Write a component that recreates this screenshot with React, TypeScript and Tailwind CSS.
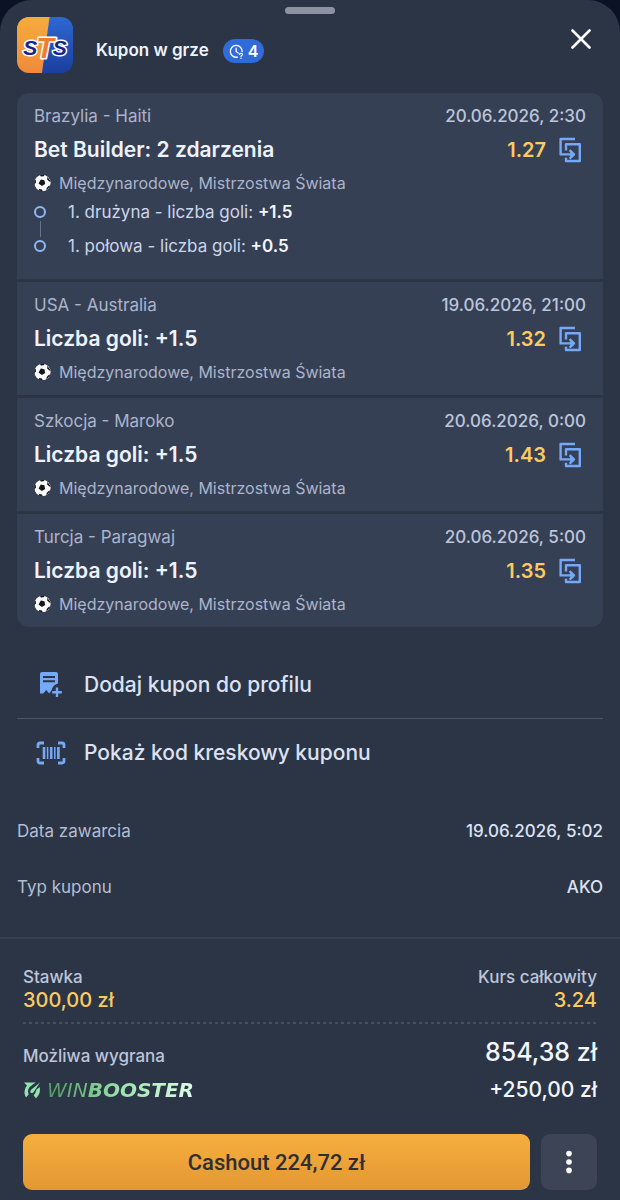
import type { ReactNode } from "react";

type Leg = {
  match: string;
  date: string;
  pick: string;
  odds: string;
  parts?: { label: string; value: string }[];
};

const legs: Leg[] = [
  {
    match: "Brazylia - Haiti",
    date: "20.06.2026, 2:30",
    pick: "Bet Builder: 2 zdarzenia",
    odds: "1.27",
    parts: [
      { label: "1. drużyna - liczba goli:", value: "+1.5" },
      { label: "1. połowa - liczba goli:", value: "+0.5" },
    ],
  },
  { match: "USA - Australia", date: "19.06.2026, 21:00", pick: "Liczba goli: +1.5", odds: "1.32" },
  { match: "Szkocja - Maroko", date: "20.06.2026, 0:00", pick: "Liczba goli: +1.5", odds: "1.43" },
  { match: "Turcja - Paragwaj", date: "20.06.2026, 5:00", pick: "Liczba goli: +1.5", odds: "1.35" },
];

function Logo() {
  return (
    <svg viewBox="0 0 56 56" className="h-14 w-14 shrink-0">
      <defs>
        <linearGradient id="logoOrange" x1="0" y1="0" x2="0" y2="1">
          <stop offset="0" stopColor="#f5ac3c" />
          <stop offset="1" stopColor="#f08a3a" />
        </linearGradient>
        <linearGradient id="logoBlue" x1="0" y1="0" x2="0" y2="1">
          <stop offset="0" stopColor="#2e68d2" />
          <stop offset="1" stopColor="#1a3f9f" />
        </linearGradient>
        <clipPath id="logoClip">
          <rect width="56" height="56" rx="12" />
        </clipPath>
      </defs>
      <g clipPath="url(#logoClip)">
        <rect width="56" height="56" fill="url(#logoBlue)" />
        <path d="M0 0H32.5L25 56H0Z" fill="url(#logoOrange)" />
      </g>
      <text
        x="28"
        y="38"
        textAnchor="middle"
        fontFamily="'Liberation Sans', sans-serif"
        fontWeight="700"
        fontStyle="italic"
        fontSize="21"
        fill="#14248a"
        stroke="#fff"
        strokeWidth="3"
        strokeLinejoin="round"
        paintOrder="stroke"
      >
        <tspan>S</tspan><tspan fontSize="29" dx="-1" dy="3" fill="#ee7f2e">T</tspan><tspan dx="-1" dy="-3">S</tspan>
      </text>
    </svg>
  );
}

function PendingIcon() {
  return (
    <svg viewBox="0 0 16 16" className="h-[15px] w-[15px]" fill="none" stroke="#fff" strokeWidth="1.4" strokeLinecap="round">
      <path d="M14 8.2A6.3 6.3 0 1 0 9 14" />
      <path d="M7.6 4.3V8l2.2 1.6" />
      <path d="M11.3 11.2c0-1.9 3-1.8 3 0 0 1.1-1.5 1.1-1.5 2.2" strokeWidth="1.2" />
      <path d="M12.8 15.2v.1" />
    </svg>
  );
}

function CopyBetIcon() {
  return (
    <svg viewBox="0 0 24 26" className="h-[26px] w-6" fill="none" stroke="#75a9f8" strokeWidth="2.4" strokeLinejoin="round">
      <path d="M17 2H2.6V17.4H14" />
      <path d="M8 13.4V7.2H21.8V24H8V20.8" />
      <path d="M11.6 13.2L16 17.4L11.6 21.6" />
      <path d="M12.4 14.4L16 17.4L12.4 20.4Z" fill="#75a9f8" stroke="none" />
    </svg>
  );
}

function BallIcon() {
  return (
    <svg viewBox="0 0 18 18" className="h-[18px] w-[17px] shrink-0">
      <defs>
        <clipPath id="ballClip">
          <circle cx="9" cy="9" r="8.8" />
        </clipPath>
      </defs>
      <g clipPath="url(#ballClip)">
        <circle cx="9" cy="9" r="8.8" fill="#fafafa" />
        <g fill="#15171c">
          <path d="M7.2 5.4L11 6.2L11.8 10L8.4 12.2L4.8 9.4Z" />
          <path d="M6 0L11.6 0L10.2 1.8L7.2 2Z" />
          <path d="M14 2.5L18 7.5L16 7.4L14 5Z" />
          <path d="M18 11.5L13.2 17L13.4 14.4L15.4 12.2Z" />
          <path d="M4 18L9.4 18L8.4 16L5.6 15.4Z" />
          <path d="M0 5.6L1.8 5.6L2 8.6L0 11Z" />
        </g>
      </g>
    </svg>
  );
}

function AddCouponIcon() {
  return (
    <svg viewBox="0 0 24 28" className="h-7 w-6">
      <path
        fillRule="evenodd"
        fill="#75a9f8"
        d="M3 1H17Q19 1 19 3V12.4Q13.5 14.2 12.6 19.2L10.2 22.4L7.2 19L4.2 22.6L1 22.6V3Q1 1 3 1ZM4 5V7H16V5ZM4 9.2V11.2H16V9.2Z"
      />
      <path d="M18 16.4V26M13.2 21.2H22.8" stroke="#75a9f8" strokeWidth="2.4" />
    </svg>
  );
}

function BarcodeIcon() {
  return (
    <svg viewBox="0 0 30 24" className="h-6 w-[30px]" fill="none" stroke="#75a9f8">
      <path
        strokeWidth="2.8"
        d="M2 7V4Q2 2 4 2H8M22 2H26Q28 2 28 4V7M28 17V20Q28 22 26 22H22M8 22H4Q2 22 2 20V17"
      />
      <path strokeWidth="2.6" d="M8 6V18M22.4 6V18M15.2 6V18" />
      <path strokeWidth="1.5" d="M11.6 6V18M18.8 6V18" />
    </svg>
  );
}

function BoosterIcon() {
  return (
    <svg viewBox="0 0 18 18" className="h-[18px] w-[18px]" fill="#8fe3ac">
      <path d="M1 1.6L13 1.4Q9.8 3 8.6 4.6Q5.4 6.4 5 10.2L5.6 13.6L3 16.6Q.2 11.6 2.6 6.4L4 4.6Z" />
      <path d="M17 1.4L10.6 11.2Q8.4 13 7.4 11.2Q7 9.6 8.4 8.6Z" />
      <path d="M16.6 6Q18.2 12.6 12.8 17.2L10.6 14.2Q12.8 12.2 13.4 8.8Z" />
    </svg>
  );
}

function LegCard({ leg }: { leg: Leg }) {
  return (
    <li className="bg-[#364055] px-[17px] pt-[11px] pb-[13px]">
      <div className="flex justify-between text-[17px] leading-6">
        <span className="text-[#abb4ca]">{leg.match}</span>
        <span className="font-medium text-[#bcc5db]">{leg.date}</span>
      </div>
      <div className="mt-2 flex items-center justify-between leading-7 font-semibold">
        <span className="text-[21px] text-[#eef2fc]">{leg.pick}</span>
        <span className="flex items-center gap-3 pr-1 text-xl leading-7 text-[#fbcb62]">
          {leg.odds}
          <button type="button" aria-label="Kopiuj zakład" className="cursor-pointer">
            <CopyBetIcon />
          </button>
        </span>
      </div>
      <div className="mt-[9px] flex items-center gap-2 text-base leading-5 text-[#abb4ca]">
        <BallIcon />
        Międzynarodowe, Mistrzostwa Świata
      </div>
      {leg.parts && (
        <ul className="mt-2 mb-[9px] flex flex-col gap-3">
          {leg.parts.map((part, i) => (
            <li key={part.label} className="relative flex items-center text-[17px] leading-[22px] text-[#ccd5ea]">
              <span className="mr-[22px] h-3 w-3 rounded-full border-2 border-[#8fb8f4]" />
              {i > 0 && <span className="absolute -top-3.5 left-1.5 h-4 w-px bg-[#68728a]" />}
              <span>
                {part.label} <b className="font-semibold text-[#f3f6fe]">{part.value}</b>
              </span>
            </li>
          ))}
        </ul>
      )}
    </li>
  );
}

function Action({ icon, children }: { icon: ReactNode; children: ReactNode }) {
  return (
    <button
      type="button"
      className="flex h-[68px] w-full cursor-pointer items-center text-left text-[21px] font-medium text-[#dbe2f3]"
    >
      <span className="flex w-[67px] justify-center">{icon}</span>
      {children}
    </button>
  );
}

export default function App() {
  return (
    <div className="min-h-screen bg-[#0b1226] font-['Inter',sans-serif]">
      <main className="flex min-h-screen flex-col rounded-t-[32px] bg-[#2c3546]">
        <div className="mx-auto mt-[7px] h-[7px] w-[50px] rounded-full bg-[#8e93a2]" />
        {/* header */}
        <header className="mt-[3px] flex items-center px-[17px]">
          <Logo />
          <h1 className="mt-3 ml-[23px] text-[17px] font-semibold text-[#eef2fc]">Kupon w grze</h1>
          <span className="mt-3 ml-3.5 flex h-6 items-center gap-1 rounded-full bg-[#2f6bd9] px-1.5 text-base font-semibold text-white">
            <PendingIcon />4
          </span>
          <button type="button" aria-label="Zamknij" className="mr-3 mb-3 ml-auto cursor-pointer">
            <svg viewBox="0 0 20 20" className="h-5 w-5" stroke="#fff" strokeWidth="2.6" strokeLinecap="round">
              <path d="M1.5 1.5L18.5 18.5M18.5 1.5L1.5 18.5" />
            </svg>
          </button>
        </header>

        {/* bets */}
        <ul className="mx-[17px] mt-5 flex flex-col gap-[3px] overflow-hidden rounded-xl">
          {legs.map((leg) => (
            <LegCard key={leg.match} leg={leg} />
          ))}
        </ul>

        <div className="mx-[17px] mt-6 divide-y divide-[#4c5567]">
          <Action icon={<AddCouponIcon />}>Dodaj kupon do profilu</Action>
          <Action icon={<BarcodeIcon />}>Pokaż kod kreskowy kuponu</Action>
        </div>

        <dl className="mx-[17px] mt-8 mb-9 flex flex-col gap-8 text-[17px] leading-6">
          <div className="flex justify-between">
            <dt className="text-[#b4bdd3]">Data zawarcia</dt>
            <dd className="font-medium text-[#dbe2f3]">19.06.2026, 5:02</dd>
          </div>
          <div className="flex justify-between">
            <dt className="text-[#b4bdd3]">Typ kuponu</dt>
            <dd className="font-medium text-[#dbe2f3]">AKO</dd>
          </div>
        </dl>

        {/* summary */}
        <footer className="mt-auto border-t-2 border-[#363f50] px-[23px] pt-[27px] pb-2.5">
          <div className="flex justify-between font-medium">
            <div>
              <div className="text-[17px] leading-[22px] text-[#bcc5db]">Stawka</div>
              <div className="text-xl leading-6 text-[#fbcb62]">300,00 zł</div>
            </div>
            <div className="text-right">
              <div className="text-[17px] leading-[22px] text-[#bcc5db]">Kurs całkowity</div>
              <div className="text-xl leading-6 text-[#fbcb62]">3.24</div>
            </div>
          </div>
          <div className="mt-2.5 h-0.5 bg-[repeating-linear-gradient(to_right,#454e60_0_3px,transparent_3px_6px)]" />
          <div className="mt-3 flex items-center justify-between font-medium">
            <span className="pt-2 text-[17px] leading-6 text-[#bcc5db]">Możliwa wygrana</span>
            <span className="text-[25px] leading-8 text-[#f3f6fe]">854,38 zł</span>
          </div>
          <div className="mt-2 flex items-center justify-between">
            <span className="flex items-center gap-1.5">
              <BoosterIcon />
              <span className="bg-linear-to-r from-[#4c9b5c] via-[#9be3ac] to-[#ddfbe8] bg-clip-text font-['DejaVu_Sans',sans-serif] text-xl leading-6 font-bold text-transparent italic">
                <span className="font-extralight">WIN</span>BOOSTER
              </span>
            </span>
            <span className="text-[21px] leading-7 font-medium text-[#f3f6fe]">+250,00 zł</span>
          </div>
          <div className="mt-[30px] flex gap-[11px]">
            <button
              type="button"
              className="h-14 flex-1 cursor-pointer rounded-[9px] bg-linear-to-b from-[#f6af3d] to-[#e39734] font-['Roboto',sans-serif] text-[22px] font-medium text-[#2f2f33]"
            >
              Cashout 224,72 zł
            </button>
            <button
              type="button"
              aria-label="Więcej"
              className="flex h-14 w-14 cursor-pointer items-center justify-center rounded-[9px] bg-[#3c4456]"
            >
              <svg viewBox="0 0 6 24" className="h-6 w-1.5" fill="#fff">
                <circle cx="3" cy="3.6" r="2.8" />
                <circle cx="3" cy="12" r="2.8" />
                <circle cx="3" cy="20.4" r="2.8" />
              </svg>
            </button>
          </div>
        </footer>
      </main>
    </div>
  );
}
